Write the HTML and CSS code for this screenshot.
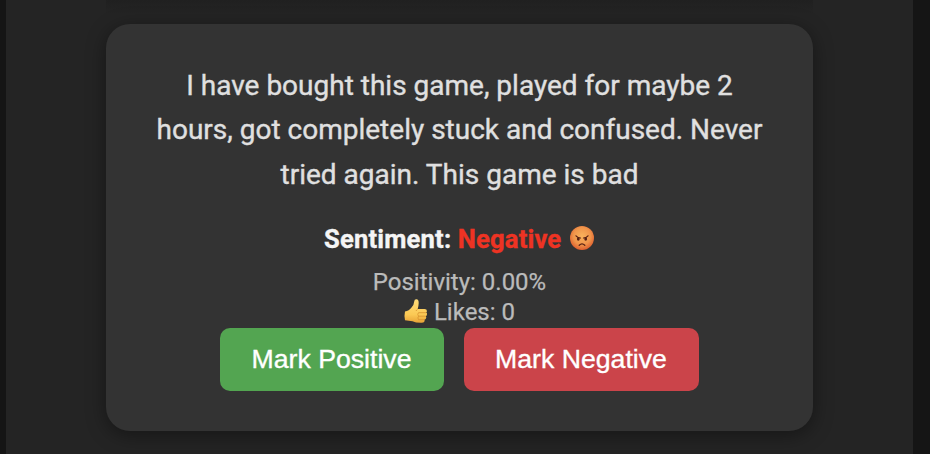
FILE: index.html
```html
<!DOCTYPE html>
<html lang="en">
<head>
<meta charset="utf-8">
<title>Review</title>
<link rel="stylesheet" href="styles.css">
</head>
<body>
<main class="page">
  <article class="card">
    <p class="review">I have bought this game, played for maybe 2<br>hours, got completely stuck and confused. Never<br>tried again. This game is bad</p>
    <p class="sentiment">Sentiment: <span class="negative">Negative</span>
      <svg class="face" viewBox="0 0 26 26" aria-hidden="true">
        <defs><radialGradient id="anger" cx=".5" cy=".42" r=".6"><stop offset="0" stop-color="#f9b25c"/><stop offset=".6" stop-color="#f0944a"/><stop offset="1" stop-color="#dc5a2c"/></radialGradient></defs>
        <circle cx="13" cy="13" r="12" fill="url(#anger)"/>
        <path d="M7 10.800Q8.800 12.800 11.500 13M19 10.800Q17.200 12.800 14.500 13" fill="none" stroke="#572013" stroke-width="1.200" stroke-linecap="round"/>
        <ellipse cx="9.300" cy="14" rx="1.400" ry="1.800" fill="#572013"/><ellipse cx="16.700" cy="14" rx="1.400" ry="1.800" fill="#572013"/>
        <path d="M10.200 20.200Q13 17.600 15.800 20.200" fill="none" stroke="#572013" stroke-width="1.300" stroke-linecap="round"/>
      </svg></p>
    <p class="meta">Positivity: 0.00%</p>
    <p class="meta"><svg class="thumb" viewBox="0 0 24 26" aria-hidden="true">
        <defs><linearGradient id="skin" x1="0" y1="0" x2="0" y2="1"><stop offset="0" stop-color="#ffdc79"/><stop offset=".65" stop-color="#fbc954"/><stop offset="1" stop-color="#e8a236"/></linearGradient></defs>
        <path d="M1 13.500Q5 13 7.500 9.500Q10 7 10.200 3.500Q10.400 1 12.500 1.200Q14.800 1.500 14.700 5Q14.600 8 13.700 11H20.500Q23 11.200 22.900 13Q22.900 14.200 22.200 14.600Q23.500 15.500 22.900 17Q22.600 18 21.700 18.200Q22.800 19.200 22 20.500Q21.600 21.400 20.600 21.600Q21 24.800 17.800 24.800Q12 25 8.500 23.300L1 22.300Q0 17.500 1 13.500Z" fill="url(#skin)"/>
        <path d="M14.500 14.700H22M14.500 18.200H21.800M14.500 21.700H20.500M14.500 14.700Q13 16.200 14.500 18.200Q13.300 20 14.500 21.700M13.700 11Q12.500 12 12 13" fill="none" stroke="#d8922f" stroke-width=".8"/>
      </svg> Likes: 0</p>
    <div class="actions"><button class="btn positive">Mark Positive</button><button class="btn danger">Mark Negative</button></div>
  </article>
</main>
</body>
</html>
```
FILE: styles.css
```css
* { box-sizing: border-box; }
body { margin: 0; background: #151515; font-family: Roboto, sans-serif; overflow: hidden; }
.page { height: 454px; margin: 0 17px 0 6px; padding: 24px 100px; background: linear-gradient(#202020, #24242400 14px) center top / 707px 14px no-repeat #242424; }
.card { height: 407px; padding: 39.500px 40px; border-radius: 24px; background: #333; box-shadow: 0 4px 20px rgba(0,0,0,.4); text-align: center; }
p { margin: 0; }
.review { color: #e0e0e0; font-size: 28px; line-height: 44.800px; white-space: nowrap; -webkit-text-stroke: .35px; }
.sentiment { margin-top: 23px; color: #f5f5f5; font-size: 25.600px; font-weight: 700; line-height: 36px; -webkit-text-stroke: .35px; letter-spacing: .16px; }
.negative { color: #ee3323; }
.face { width: 26px; height: 26px; margin-left: 1px; vertical-align: -3px; }
.meta { color: #bbb; font-size: 24px; line-height: 30px; -webkit-text-stroke: .25px; }
.sentiment + .meta { margin-top: 10px; }
.thumb { width: 24px; height: 26px; vertical-align: -4px; }
.actions { display: flex; justify-content: center; gap: 20px; margin-top: 1.100px; }
.btn { width: 224px; height: 63px; padding: 0 1px 0 0; border: 0; border-radius: 10px; color: #fff; font: 26.667px "Liberation Sans", Arial, sans-serif; -webkit-text-stroke: .35px; }
.positive { background: #53a551; }
.danger { width: 235px; background: #cb444a; }
```
